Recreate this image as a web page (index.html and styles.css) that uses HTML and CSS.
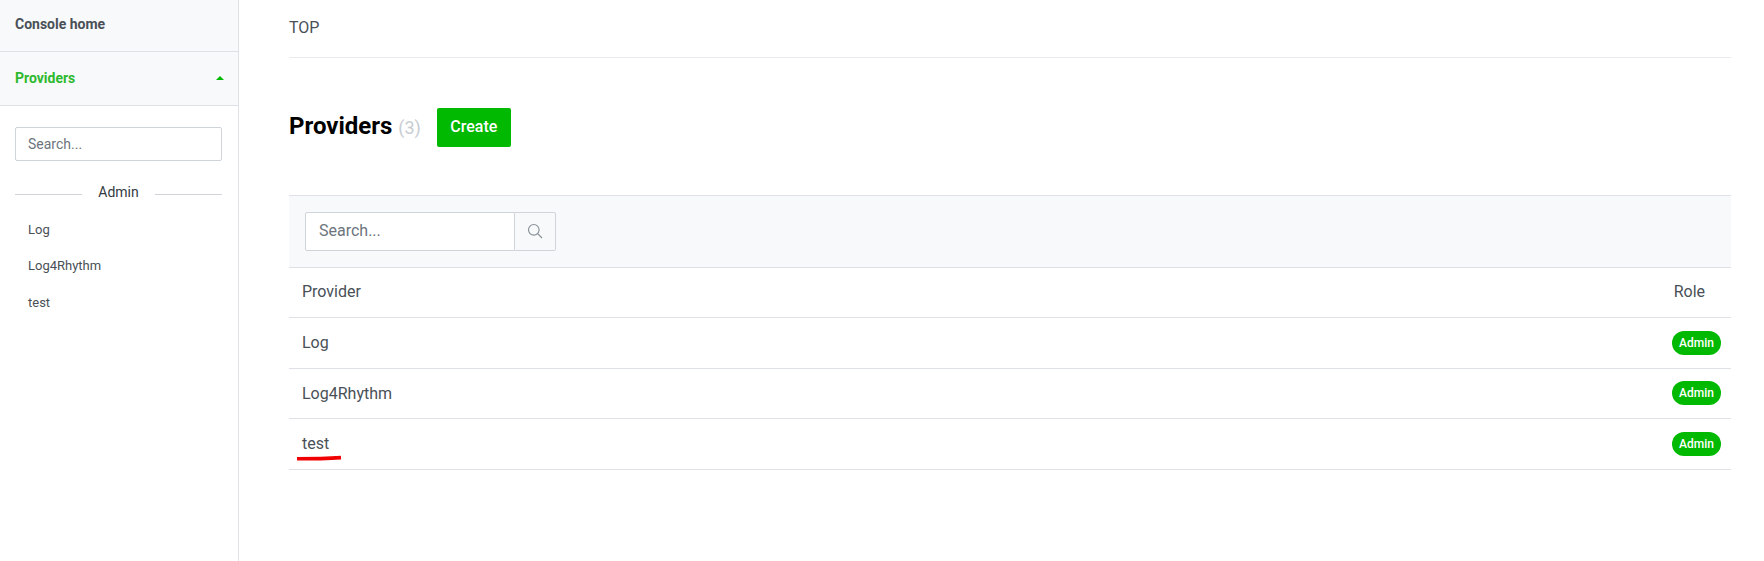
FILE: index.html
```html
<!DOCTYPE html>
<html lang="en">
<head>
<meta charset="utf-8">
<title>Providers</title>
<link rel="stylesheet" href="styles.css">
</head>
<body>
<div class="app">
  <aside class="sidebar">
    <a class="nav-head home">Console home</a>
    <a class="nav-head active">Providers <span class="caret"></span></a>
    <div class="side-body">
      <input class="side-search" placeholder="Search...">
      <div class="divider"><span>Admin</span></div>
      <ul class="side-list">
        <li>Log</li>
        <li>Log4Rhythm</li>
        <li>test</li>
      </ul>
    </div>
  </aside>
  <main class="main">
    <div class="crumb">TOP</div>
    <div class="title-row">
      <h1>Providers <small>(3)</small></h1>
      <button class="create">Create</button>
    </div>
    <section class="panel">
      <div class="toolbar">
        <div class="search-group">
          <input placeholder="Search...">
          <button aria-label="Search">
            <svg width="16" height="16" viewBox="0 0 16 16" fill="none" stroke="#868e96" stroke-width="1.1"><circle cx="6.8" cy="6.8" r="5.3"/><path d="M10.7 10.7 15 15"/></svg>
          </button>
        </div>
      </div>
      <div class="row head"><span>Provider</span><span class="role-h">Role</span></div>
      <div class="row"><span>Log</span><span class="badge">Admin</span></div>
      <div class="row"><span>Log4Rhythm</span><span class="badge">Admin</span></div>
      <div class="row last"><span class="marked">test<svg class="scribble" width="46" height="6" viewBox="0 0 46 6"><path d="M1 3.8C14 3.8 30 3.6 45 2.6" fill="none" stroke="#f00000" stroke-width="3.6"/></svg></span><span class="badge">Admin</span></div>
    </section>
  </main>
</div>
</body>
</html>
```
FILE: styles.css
```css
* { box-sizing: border-box; }
html, body { margin: 0; height: 100%; overflow: hidden; }
body { font-family: Roboto, "Liberation Sans", sans-serif; color: #495057; background: #fff; }
.app { display: flex; height: 561px; }
.sidebar { width: 239px; flex: none; border-right: 1px solid #dee2e6; }
.nav-head { display: flex; align-items: center; justify-content: space-between; padding: 0 15px; background: #f8f9fa; border-bottom: 1px solid #dee2e6; font-size: 14px; font-weight: 700; color: #495057; }
.home { height: 52px; padding-bottom: 4px; }
.active { height: 54px; color: #2fb92f; padding-right: 14px; padding-bottom: 2px; }
.caret { width: 0; height: 0; border-left: 4px solid transparent; border-right: 4px solid transparent; border-bottom: 4px solid #00b900; }
.side-body { padding: 21px 16px 0 15px; }
.side-search { display: block; width: 207px; height: 34px; padding: 0 12px; border: 1px solid #ced4da; border-radius: 2px; font: 14px Roboto, sans-serif; outline: none; }
.side-search::placeholder, .search-group input::placeholder { color: #6c757d; opacity: 1; }
.divider { display: flex; align-items: center; gap: 16px; margin-top: 20px; height: 22px; font-size: 14px; color: #343a40; }
.divider::before, .divider::after { content: ""; flex: 1; height: 1px; background: #ced4da; position: relative; top: 2px; }
.side-list { list-style: none; margin: 9px 0 0; padding: 0 0 0 13px; font-size: 13px; }
.side-list li { height: 36px; line-height: 35px; }
.side-list li:last-child { margin-top: 1px; }
.main { flex: 1; padding: 0 33px 0 50px; min-width: 0; }
.crumb { height: 58px; padding-top: 18px; border-bottom: 1px solid #e9ecef; font-size: 16px; line-height: 20px; }
.title-row { display: flex; align-items: center; gap: 16px; margin-top: 50px; height: 39px; }
h1 { margin: -2px 0 0; font-size: 24px; line-height: 34px; font-weight: 700; color: #000; }
small { font-size: 18px; font-weight: 400; color: #c8cdd2; }
.create { width: 74px; height: 39px; border: 0; border-radius: 2px; background: #00b900; color: #fff; font: 500 16px/36px Roboto, sans-serif; padding: 0 0 2px; }
.panel { margin-top: 48px; }
.toolbar { height: 73px; padding: 16px 16px 0; background: #f8f9fa; border-top: 1px solid #dee2e6; border-bottom: 1px solid #dee2e6; }
.search-group { display: flex; width: 251px; height: 39px; }
.search-group input { width: 210px; border: 1px solid #ced4da; border-radius: 2px 0 0 2px; padding: 0 13px 2px; font: 16px Roboto, sans-serif; outline: none; }
.search-group button { display: flex; align-items: center; justify-content: center; flex: 1; border: 1px solid #ced4da; border-left: 0; border-radius: 0 2px 2px 0; background: #f8f9fa; padding: 0 0 1px; }
.row { display: flex; align-items: center; justify-content: space-between; height: 50.5px; padding: 0 10px 0 13px; border-bottom: 1px solid #dee2e6; font-size: 16px; }
.row.head { height: 50px; padding-bottom: 2px; }
.role-h { padding-right: 16px; }
.badge { display: flex; align-items: center; justify-content: center; width: 49px; height: 24px; border-radius: 12px; background: #00b900; color: #fff; font-size: 12px; font-weight: 500; }
.marked { position: relative; }
.scribble { position: absolute; left: -6px; top: 21px; }
```
